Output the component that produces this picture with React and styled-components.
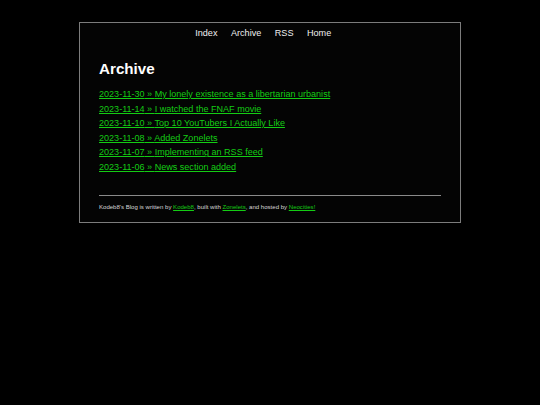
import React from "react";
import styled, { createGlobalStyle } from "styled-components";

const Global = createGlobalStyle`
  html, body { margin: 0; padding: 0; background: #000; }
  body { font-family: "Liberation Sans", Arial, sans-serif; color: #e6e6e6; }
`;

const Box = styled.div`
  width: 342px;
  margin: 22px auto 0;
  padding: 3px 19px 12.5px;
  border: 1px solid #7c7c7c;
  background: #040404;
`;

const Nav = styled.nav`
  text-align: center;
  font-size: 9.1px;
  line-height: 14.4px;
`;

const NavLink = styled.a`
  color: #f0f0f0;
  text-decoration: none;
  margin-right: 13.5px;
`;

const Title = styled.h1`
  margin: 19.4px 0 10.2px;
  font-size: 15.2px;
  font-weight: bold;
  line-height: normal;
  color: #fff;
`;

const List = styled.ul`
  list-style: none;
  margin: 0;
  padding: 0;
`;

const Item = styled.li`
  font-size: 9.05px;
  line-height: 14.6px;
`;

const Link = styled.a`
  color: #14cc14;
  text-decoration: underline;
`;

const Rule = styled.hr`
  height: 0;
  border: none;
  border-top: 1px solid #8a8a8a;
  margin: 20px 0 8px;
`;

const Footer = styled.footer`
  font-size: 6.05px;
  line-height: normal;
  color: #d8d8d8;
`;

const posts = [
  ["2023-11-30", "My lonely existence as a libertarian urbanist"],
  ["2023-11-14", "I watched the FNAF movie"],
  ["2023-11-10", "Top 10 YouTubers I Actually Like"],
  ["2023-11-08", "Added Zonelets"],
  ["2023-11-07", "Implementing an RSS feed"],
  ["2023-11-06", "News section added"],
];

export default function App() {
  return (
    <>
      <Global />
      <Box>
        <Nav>
          {["Index", "Archive", "RSS", "Home"].map((n) => (
            <NavLink key={n} href="#">{n}</NavLink>
          ))}
        </Nav>
        <Title>Archive</Title>
        <List>
          {posts.map(([d, t]) => (
            <Item key={d}>
              <Link href="#">{d} » {t}</Link>
            </Item>
          ))}
        </List>
        <Rule />
        <Footer>
          Kodeb8's Blog is written by <Link href="#">Kodeb8</Link>, built with{" "}
          <Link href="#">Zonelets</Link>, and hosted by <Link href="#">Neocities!</Link>
        </Footer>
      </Box>
    </>
  );
}
